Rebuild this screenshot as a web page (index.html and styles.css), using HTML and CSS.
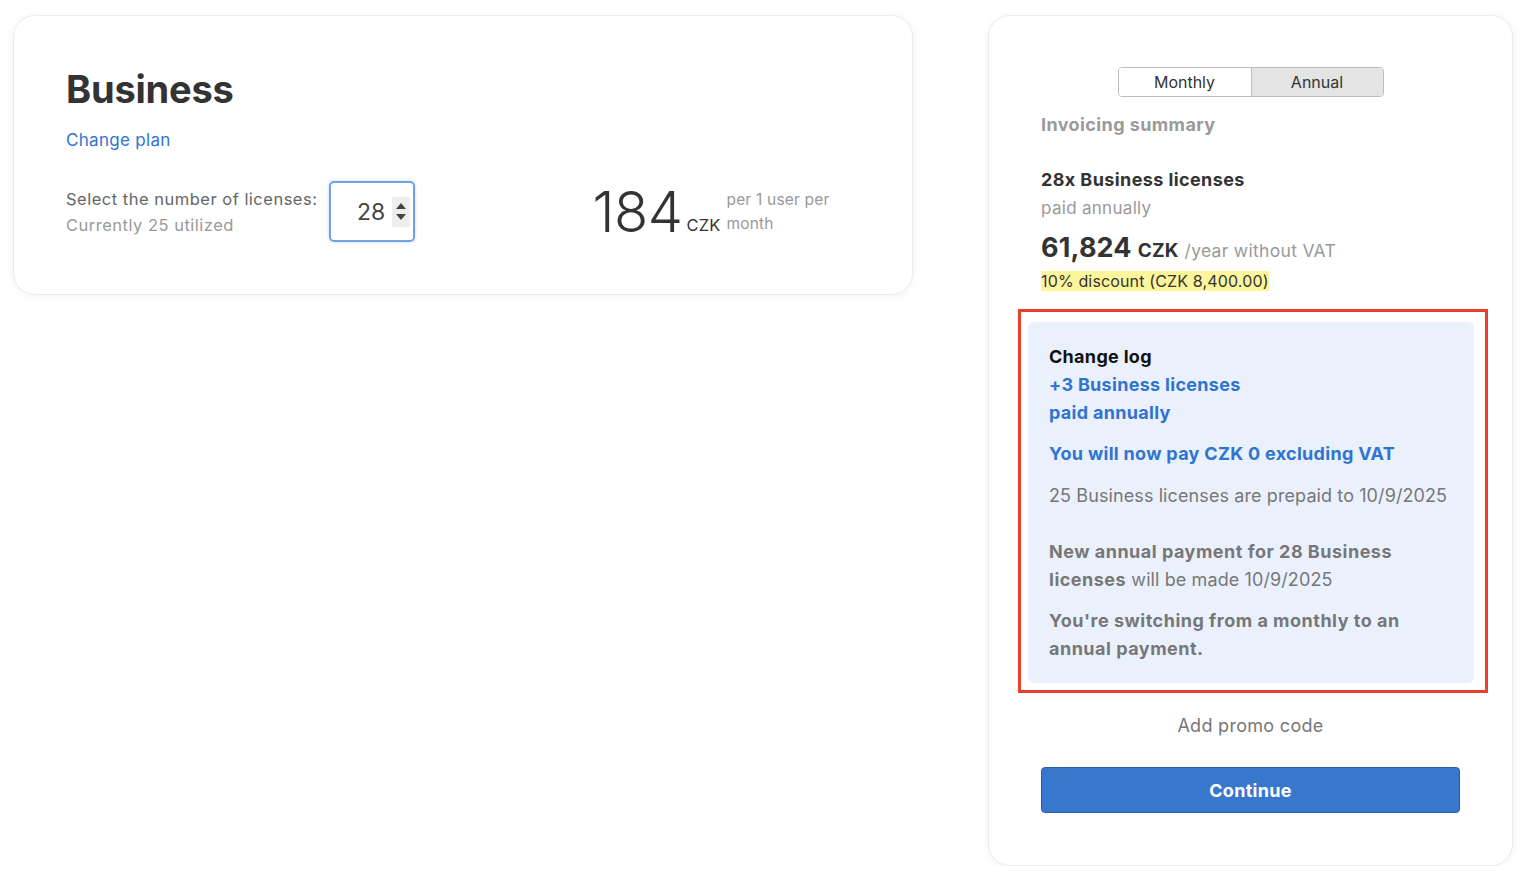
FILE: index.html
```html
<!DOCTYPE html>
<html lang="en">
  <head>
    <meta charset="UTF-8" />
    <meta name="viewport" content="width=device-width, initial-scale=1.0" />
    <title>Business plan</title>
    <link rel="stylesheet" href="styles.css">
  </head>
  <body>
    <div class="page">
      <div class="card plan">
        <h1 class="plan__title">Business</h1>
        <a class="plan__change" href="#">Change plan</a>
        <div class="plan__row">
          <div class="plan__label">
            <div class="plan__select">Select the number of licenses:</div>
            <div class="plan__used">Currently 25 utilized</div>
          </div>
          <div class="qty">
            <span class="qty__value">28</span>
            <span class="qty__spin">
              <span class="qty__up"></span>
              <span class="qty__down"></span>
            </span>
          </div>
          <div class="price">
            <span class="price__num">184</span>
            <span class="price__cur">CZK</span>
            <span class="price__per">per 1 user per<br>month</span>
          </div>
        </div>
      </div>

      <div class="card summary">
        <div class="toggle">
          <button class="toggle__btn">Monthly</button>
          <button class="toggle__btn toggle__btn--active">Annual</button>
        </div>
        <div class="summary__head">Invoicing summary</div>
        <div class="summary__item">28x Business licenses</div>
        <div class="summary__sub">paid annually</div>
        <div class="summary__total">
          <span class="summary__amount">61,824</span>
          <span class="summary__cur">CZK</span>
          <span class="summary__per">/year without VAT</span>
        </div>
        <div class="summary__discount"><mark>10% discount (CZK 8,400.00)</mark></div>

        <div class="annot">
          <div class="log">
            <div class="log__title">Change log</div>
            <div class="log__blue">+3 Business licenses</div>
            <div class="log__blue">paid annually</div>
            <div class="log__blue log__pay">You will now pay CZK 0 excluding VAT</div>
            <div class="log__text">25 Business licenses are prepaid to 10/9/2025</div>
            <p class="log__text log__new"><b>New annual payment for 28 Business</b><br><b>licenses</b> will be made 10/9/2025</p>
            <p class="log__text log__switch"><b>You're switching from a monthly to an</b><br><b>annual payment.</b></p>
          </div>
        </div>

        <div class="promo">Add promo code</div>
        <button class="continue">Continue</button>
      </div>
    </div>
  </body>
</html>
```

FILE: styles.css
```css
*,
*::before,
*::after {
  box-sizing: border-box;
  margin: 0;
  padding: 0;
}

:root {
  --text: #333;
  --muted: #777;
  --light: #999;
  --blue: #2f74d0;
  --btn: #3878cc;
  --btn-border: #2a60a8;
  --log-bg: #eaf1fd;
  --red: #e8412c;
}

body {
  font-family: Inter, "Noto Sans", sans-serif;
  color: var(--text);
  background: #fff;
  letter-spacing: 0.15px;
}

.page {
  display: flex;
  justify-content: space-between;
  align-items: flex-start;
  padding: 15px 15px 0 13px;
}

.card {
  background: #fff;
  border: 1px solid #ececec;
  border-radius: 22px;
  box-shadow: 0 1px 8px rgba(0, 0, 0, 0.06);
}

/* left card */
.plan {
  width: 900px;
  padding: 50px 52px 52px 52px;
}
.plan__title {
  font-size: 38px;
  font-weight: 700;
  line-height: 46px;
  letter-spacing: -0.2px;
  color: #333;
}
.plan__change {
  display: inline-block;
  margin-top: 17px;
  font-size: 17px;
  line-height: 22px;
  color: var(--blue);
  text-decoration: none;
  letter-spacing: 0.3px;
}
.plan__row {
  display: flex;
  align-items: center;
  margin-top: 30px;
}
.plan__label {
  font-size: 16.5px;
  line-height: 26px;
  letter-spacing: 0.5px;
}
.plan__select {
  color: #666;
}
.plan__used {
  color: var(--light);
}
.qty {
  display: flex;
  align-items: center;
  justify-content: flex-end;
  width: 86px;
  height: 61px;
  margin-left: 12px;
  padding-right: 3px;
  border: 2px solid #6fa3e4;
  border-radius: 5px;
  box-shadow: 0 0 3px rgba(80, 140, 230, 0.45);
}
.qty__value {
  font-size: 23px;
  color: #444;
  margin-right: 7px;
}
.qty__spin {
  display: flex;
  flex-direction: column;
  justify-content: center;
  gap: 5px;
  width: 18px;
  height: 30px;
  background: #eee;
  align-items: center;
}
.qty__up,
.qty__down {
  width: 0;
  height: 0;
  border-left: 5px solid transparent;
  border-right: 5px solid transparent;
}
.qty__up {
  border-bottom: 6px solid #444;
}
.qty__down {
  border-top: 6px solid #444;
}

.price {
  display: flex;
  align-items: flex-end;
  margin-left: 177px;
}
.price__num {
  font-size: 56px;
  font-weight: 300;
  line-height: 56px;
  color: #333;
  letter-spacing: -0.5px;
}
.price__cur {
  font-size: 16.5px;
  margin-left: 4px;
  margin-bottom: 5px;
  color: #333;
}
.price__per {
  font-size: 15.5px;
  line-height: 24px;
  color: var(--light);
  margin-left: 6px;
  margin-bottom: 4px;
  letter-spacing: 0.2px;
}

/* right card */
.summary {
  width: 525px;
  padding: 51px 52px 52px 52px;
  display: flex;
  flex-direction: column;
}
.toggle {
  display: flex;
  align-self: center;
  border: 1px solid #bdbdbd;
  border-radius: 4px;
  overflow: hidden;
}
.toggle__btn {
  width: 132px;
  height: 28px;
  border: none;
  background: #fff;
  font-family: inherit;
  font-size: 16px;
  color: #333;
}
.toggle__btn--active {
  background: #e4e4e4;
  border-left: 1px solid #bdbdbd;
}
.summary__head {
  margin-top: 16px;
  font-size: 18px;
  font-weight: 700;
  line-height: 24px;
  color: #9a9a9a;
  letter-spacing: 0.4px;
}
.summary__item {
  margin-top: 31px;
  font-size: 18px;
  font-weight: 700;
  line-height: 24px;
  color: #333;
  letter-spacing: 0.4px;
}
.summary__sub {
  font-size: 17px;
  line-height: 32px;
  color: var(--light);
  letter-spacing: 0.3px;
}
.summary__total {
  display: flex;
  align-items: baseline;
  margin-top: 6px;
  line-height: 36px;
}
.summary__amount {
  font-size: 27px;
  font-weight: 700;
  color: #333;
}
.summary__cur {
  font-size: 19px;
  font-weight: 700;
  margin-left: 6px;
  color: #333;
}
.summary__per {
  font-size: 17.5px;
  color: var(--light);
  margin-left: 6px;
  letter-spacing: 0.3px;
}
.summary__discount {
  font-size: 16px;
  line-height: 25px;
}
.summary__discount mark {
  background: #fbf59c;
  color: #333;
}

.annot {
  margin: 15px -28px 0 -23px;
  padding: 10px 11px 7px 7px;
  border: 3px solid var(--red);
}
.log {
  background: var(--log-bg);
  border-radius: 6px;
  padding: 21px 21px 20px 21px;
  font-size: 18px;
  line-height: 28px;
  letter-spacing: 0.3px;
}
.log__title {
  font-weight: 700;
  color: #111;
}
.log__blue {
  font-weight: 700;
  color: var(--blue);
}
.log__pay {
  margin-top: 13px;
}
.log__text {
  color: var(--muted);
  margin-top: 14px;
  letter-spacing: 0.1px;
}
.log__text b {
  letter-spacing: 0.5px;
}
.log__new {
  margin-top: 28px;
}
.log__switch {
  margin-top: 13px;
}

.promo {
  margin-top: 21px;
  text-align: center;
  font-size: 18px;
  line-height: 24px;
  color: var(--muted);
  letter-spacing: 0.3px;
}
.continue {
  margin-top: 29px;
  height: 46px;
  border: 1px solid var(--btn-border);
  border-radius: 4px;
  background: var(--btn);
  color: #fff;
  font-family: inherit;
  font-size: 18px;
  font-weight: 700;
  letter-spacing: 0.3px;
}
```
